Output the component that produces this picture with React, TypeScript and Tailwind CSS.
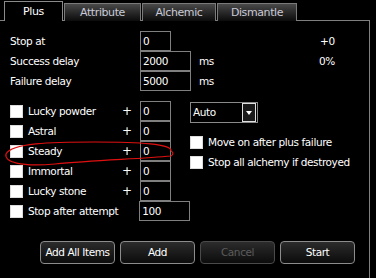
import React from 'react';

const Field = ({ value, wide }: { value: string; wide?: boolean }) => (
  <div
    className={`h-[20px] ${wide ? 'w-[51px]' : 'w-[31px]'} border border-[#7f7f7f] bg-black pl-[2px] flex items-center text-white`}
  >
    {value}
  </div>
);

const Box = () => <div className="w-[13px] h-[13px] bg-white border border-[#dcdcdc] shrink-0" />;

const Tab = ({ label, w }: { label: string; w: string }) => (
  <div
    className={`${w} h-[18px] border border-b-0 border-[#7a7a7a] bg-linear-to-b from-[#4a4a4a] to-[#0c0c0c] flex items-center justify-center text-[#c9cad6] text-[11px] mr-px`}
  >
    {label}
  </div>
);

const items = ['Lucky powder', 'Astral', 'Steady', 'Immortal', 'Lucky stone'];

const Button = ({ label, disabled }: { label: string; disabled?: boolean }) => (
  <div
    className={`w-[75px] h-[23px] rounded-[4px] border flex items-center justify-center bg-linear-to-b from-[#2c2c2c] to-[#0c0c0c] ${
      disabled ? 'border-[#4a4a4a] text-[#5c5c5c]' : 'border-[#8c8c8c] text-white'
    }`}
  >
    {label}
  </div>
);

export default function App() {
  return (
    <div className="relative w-[376px] h-[278px] overflow-hidden bg-black text-white text-[10.5px] tracking-[-0.4px] leading-none font-['DejaVu_Sans',Verdana,sans-serif]">
      {/* tabs */}
      <div className="flex items-end h-[21px] pl-[4px]">
        <div className="relative z-10 w-[59px] h-[20px] border border-b-0 border-[#8a8a8a] bg-black flex items-center justify-center text-white text-[11px] mr-px">
          Plus
        </div>
        <Tab label="Attribute" w="w-[77px]" />
        <Tab label="Alchemic" w="w-[74px]" />
        <Tab label="Dismantle" w="w-[80px]" />
      </div>

      {/* panel */}
      <div className="-mt-px w-[370px] h-[300px] border-t border-r border-[#7f7f7f] pt-[10px] pl-[10px]">
        <div className="flex h-[20px] items-center">
          <span className="w-[130px]">Stop at</span>
          <Field value="0" />
          <span className="w-[149px]" />
          <span>+0</span>
        </div>
        <div className="flex h-[20px] items-center">
          <span className="w-[130px]">Success delay</span>
          <Field value="2000" wide />
          <span className="w-[128px] pl-[8px]">ms</span>
          <span>0%</span>
        </div>
        <div className="flex h-[20px] items-center">
          <span className="w-[130px]">Failure delay</span>
          <Field value="5000" wide />
          <span className="pl-[8px]">ms</span>
        </div>

        <div className="flex mt-[10px]">
          <div className="w-[180px]">
            {items.map(label => (
              <div key={label} className="flex h-[20px] items-center">
                <div className="w-[18px]">
                  <Box />
                </div>
                <span className="w-[94px]">{label}</span>
                <span className="w-[18px] text-[12px]">+</span>
                <Field value="0" />
              </div>
            ))}
            <div className="flex h-[20px] items-center">
              <div className="w-[18px]">
                <Box />
              </div>
              <span className="w-[112px]">Stop after attempt</span>
              <Field value="100" wide />
            </div>
          </div>

          <div className="pt-[1px]">
            <div className="flex items-center w-[68px] h-[21px] border border-[#8a8a8a] pl-[2px] pr-px">
              <span className="flex-1">Auto</span>
              <div className="w-[14px] h-[19px] border border-[#e0e0e0] bg-[#1a1a1a] flex items-center justify-center">
                <div className="w-0 h-0 border-l-[3px] border-r-[3px] border-t-[4px] border-l-transparent border-r-transparent border-t-white" />
              </div>
            </div>
            <div className="mt-[9px] flex h-[20px] items-center gap-[5px]">
              <Box />
              <span>Move on after plus failure</span>
            </div>
            <div className="flex h-[20px] items-center gap-[5px]">
              <Box />
              <span>Stop all alchemy if destroyed</span>
            </div>
          </div>
        </div>

        <div className="flex gap-[5px] ml-[30px] mt-[20px]">
          <Button label="Add All Items" />
          <Button label="Add" />
          <Button label="Cancel" disabled />
          <Button label="Start" />
        </div>
      </div>

      {/* hand-drawn annotation */}
      <svg className="absolute inset-0 pointer-events-none" width="376" height="278" viewBox="0 0 376 278">
        <path
          d="M 171 151 C 172 144, 140 142, 95 142 C 50 142, 12 143, 6 154 C 4 162, 20 167, 55 164 C 95 160, 140 159, 171 156 C 174 154, 173 152, 171 151"
          fill="none"
          stroke="#e01010"
          strokeWidth="1.2"
        />
      </svg>
    </div>
  );
}
